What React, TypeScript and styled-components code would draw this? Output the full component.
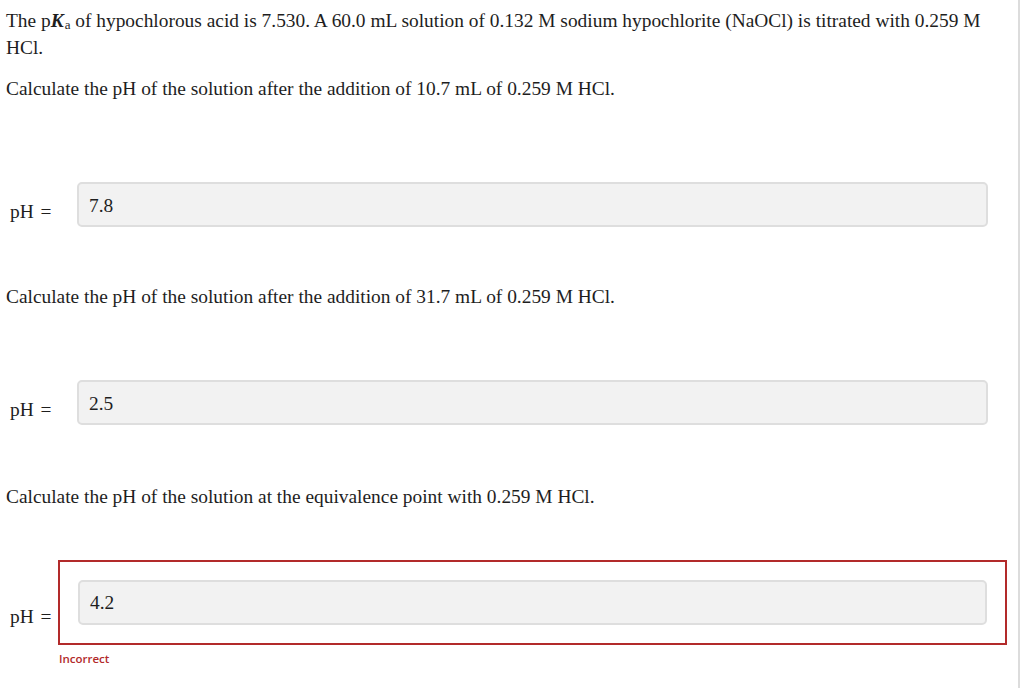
import React from "react";
import styled, { createGlobalStyle } from "styled-components";

const Global = createGlobalStyle`
  html, body { margin: 0; padding: 0; background: #fff; }
  body { font-family: "Liberation Serif", "Times New Roman", serif; color: #1e1e1e; }
`;

const Page = styled.div`
  width: 1020px;
  min-height: 688px;
  box-sizing: border-box;
  border-right: 2px solid #dcdcdc;
  padding: 7px 0 0 6px;
`;

const Para = styled.p<{ $top?: number }>`
  margin: ${(p) => p.$top ?? 0}px 0 0 0;
  font-size: 19.4px;
  line-height: 27px;
  padding-right: 28px;
`;

const Row = styled.div<{ $top: number }>`
  display: flex;
  align-items: flex-end;
  margin-top: ${(p) => p.$top}px;
  padding-right: 30px;
`;

const Label = styled.span`
  font-size: 19.4px;
  line-height: 27px;
  width: 71px;
  flex-shrink: 0;
  padding-left: 4px;
  box-sizing: border-box;
  padding-bottom: 2px;
  word-spacing: 2px;
`;

const Field = styled.div`
  flex: 1;
  height: 45px;
  box-sizing: border-box;
  background: #f2f2f2;
  border: 2px solid #dedede;
  border-radius: 5px;
  font-size: 19.4px;
  padding: 11px 10px 0 10px;
  line-height: 22px;
`;

const WrongField = styled(Field)`
  padding-top: 10px;
`;

const WrongWrap = styled.div`
  flex: 1;
`;

const RedBox = styled.div`
  border: 2px solid #b22a2a;
  padding: 18px;
`;

const Feedback = styled.div`
  font-family: "Open Sans", "Liberation Sans", sans-serif;
  font-size: 11.5px;
  font-weight: 600;
  color: #b22a2a;
  margin-top: 6px;
  padding-left: 1px;
`;

const WrongLabel = styled(Label)`
  width: 52px;
  align-self: flex-start;
  margin-top: 43px;
  padding-bottom: 0;
`;

const WrongRow = styled.div`
  display: flex;
  margin-top: 50px;
  padding-right: 11px;
`;

const Sub = styled.sub`
  font-size: 13px;
  line-height: 0;
  vertical-align: -2px;
  margin-left: 1px;
`;

export default function App() {
  return (
    <>
      <Global />
      <Page>
        <Para>
          The p<i><b>K</b></i>
          <Sub>a</Sub> of hypochlorous acid is 7.530. A 60.0 mL solution of 0.132 M sodium hypochlorite (NaOCl) is
          titrated with 0.259 M HCl.
        </Para>
        <Para $top={14}>Calculate the pH of the solution after the addition of 10.7 mL of 0.259 M HCl.</Para>
        <Row $top={80}>
          <Label>pH =</Label>
          <Field>7.8</Field>
        </Row>
        <Para $top={56}>Calculate the pH of the solution after the addition of 31.7 mL of 0.259 M HCl.</Para>
        <Row $top={70}>
          <Label>pH =</Label>
          <Field>2.5</Field>
        </Row>
        <Para $top={58}>Calculate the pH of the solution at the equivalence point with 0.259 M HCl.</Para>
        <WrongRow>
          <WrongLabel>pH =</WrongLabel>
          <WrongWrap>
            <RedBox>
              <WrongField>4.2</WrongField>
            </RedBox>
            <Feedback>Incorrect</Feedback>
          </WrongWrap>
        </WrongRow>
      </Page>
    </>
  );
}
